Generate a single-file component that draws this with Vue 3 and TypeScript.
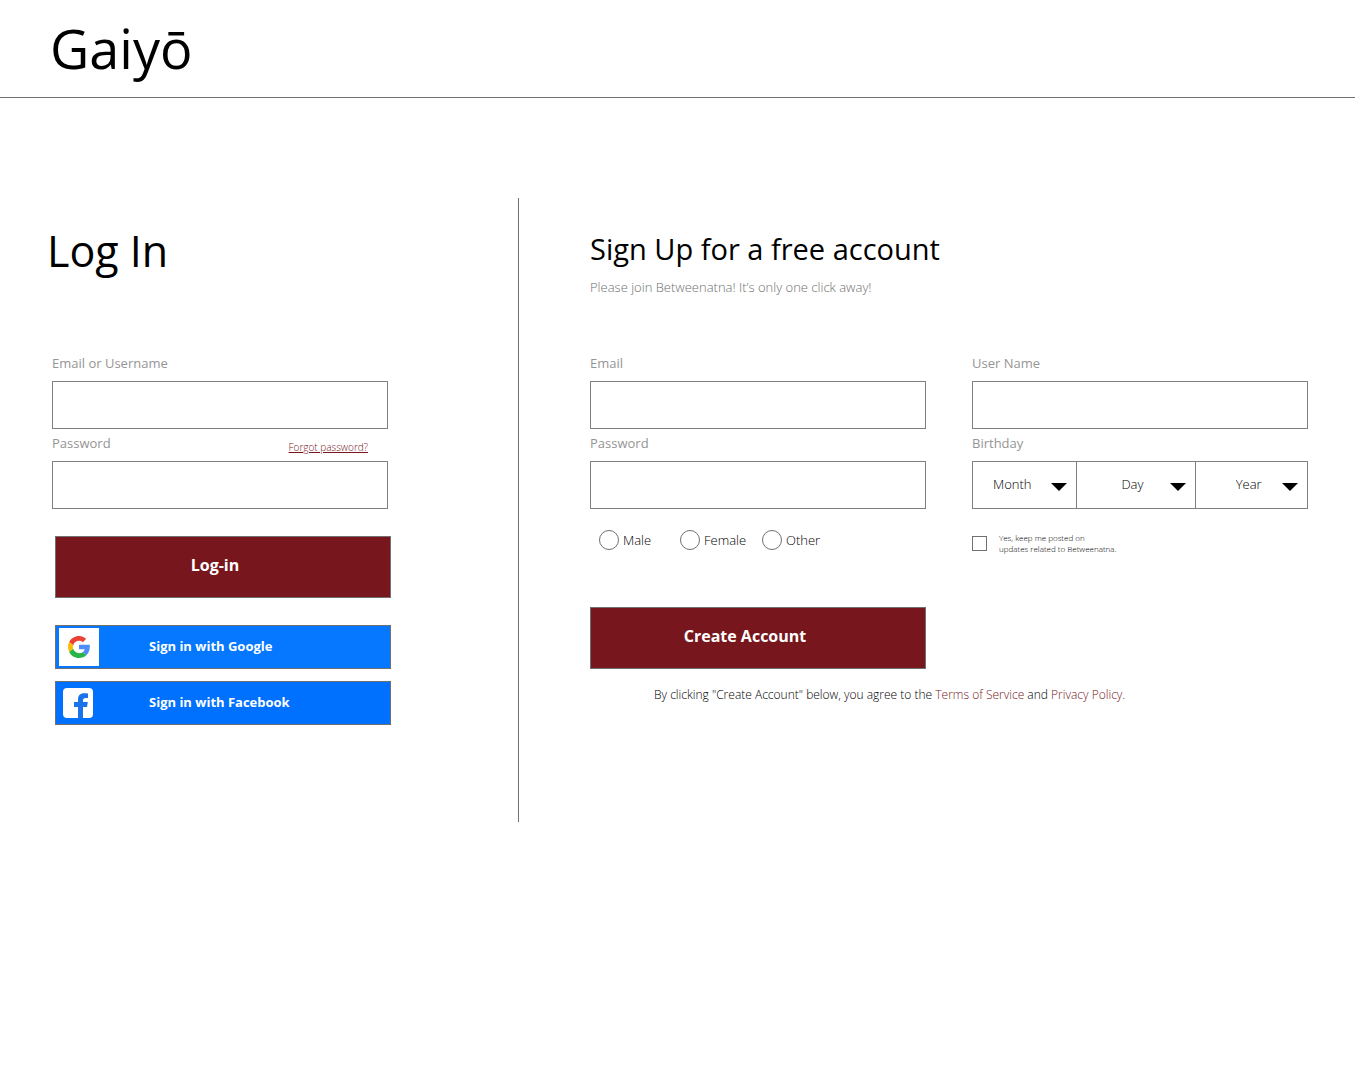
<script setup lang="ts">
import { ref } from 'vue'

interface DatePart {
  id: string
  label: string
  options: string[]
}

const login = ref({ name: '', password: '' })
const signup = ref({ email: '', password: '', userName: '', gender: '', updates: false })

const genders: string[] = ['Male', 'Female', 'Other']

const range = (from: number, to: number): string[] =>
  Array.from({ length: to - from + 1 }, (_, i) => String(from + i))

const dateParts: DatePart[] = [
  { id: 'month', label: 'Month', options: range(1, 12) },
  { id: 'day', label: 'Day', options: range(1, 31) },
  { id: 'year', label: 'Year', options: range(1930, 2020) },
]
const birthday = ref<Record<string, string>>({ month: '', day: '', year: '' })
</script>

<template>
  <div class="page">
    <header class="header">
      <span class="brand">Gaiyō</span>
    </header>

    <main class="main">
      <section class="login">
        <div class="intro">
          <h1 class="login-title">Log In</h1>
        </div>
        <form @submit.prevent>
          <label class="label" for="login-name">Email or Username</label>
          <input id="login-name" v-model="login.name" class="field" type="text" />
          <div class="label-row">
            <label class="label" for="login-password">Password</label>
            <a class="forgot" href="#">Forgot password?</a>
          </div>
          <input id="login-password" v-model="login.password" class="field" type="password" />

          <div class="login-actions">
            <button class="primary login-button" type="submit">Log-in</button>
            <button class="social google" type="button">
              <span class="social-icon google-tile">
                <svg width="22" height="22" viewBox="0 0 48 48" aria-hidden="true">
                  <path fill="#ea4335" d="M24 10.500c3.200 0 6 1.100 8.300 3.200l7.200-7.200C35.500 2.400 30.470 0 24 0 14.620 0 6.510 5.380 2.560 13.220l8.700 6.800C13.100 14.500 18.100 10.500 24 10.500z" />
                  <path fill="#4f8cf7" d="M47.500 19H24v9.800h12.400c-.6 2.700-2.200 5-4.700 6.600l8.200 6.800c4.510-4.180 7.600-10.400 7.600-18.200z" />
                  <path fill="#fbbc05" d="M11.200 28c-.5-1.300-.7-2.600-.7-4s.2-2.700.7-4l-8.640-6.780C.92 16.460 0 20.120 0 24s.92 7.540 2.560 10.780z" />
                  <path fill="#28b446" d="M24 48c6.480 0 11.930-2.130 15.890-5.810l-8.190-6.790c-2 1.300-4.600 2.100-7.700 2.100-5.900 0-10.900-4-12.800-9.500l-8.640 6.780C6.510 42.620 14.620 48 24 48z" />
                </svg>
              </span>
              <span class="social-text">Sign in with Google</span>
            </button>
            <button class="social facebook" type="button">
              <span class="social-icon facebook-tile">
                <svg width="30" height="30" viewBox="0 0 30 30" aria-hidden="true">
                  <rect width="30" height="30" rx="4" fill="#fff" />
                  <path fill="#1a73e8" d="M15 30V19h-4v-5h4v-2.500c0-4 2.200-6.200 6-6.200 1.300 0 2.700.1 4 .3v4.300h-2.400c-2 0-2.600 1-2.600 2.400V14h4.800l-.8 5h-4v11z" />
                </svg>
              </span>
              <span class="social-text">Sign in with Facebook</span>
            </button>
          </div>
        </form>
      </section>

      <section class="signup">
        <div class="intro">
          <h2 class="signup-title">Sign Up for a free account</h2>
          <p class="subtitle">Please join Betweenatna! It’s only one click away!</p>
        </div>
        <form @submit.prevent>
          <div class="columns">
            <div>
              <label class="label" for="email">Email</label>
              <input id="email" v-model="signup.email" class="field" type="email" />
              <label class="label" for="password">Password</label>
              <input id="password" v-model="signup.password" class="field" type="password" />
              <div class="genders" role="radiogroup" aria-label="Gender">
                <label v-for="g in genders" :key="g" class="gender">
                  <input v-model="signup.gender" class="radio" type="radio" name="gender" :value="g" />
                  {{ g }}
                </label>
              </div>
              <button class="primary create-button" type="submit">Create Account</button>
            </div>
            <div>
              <label class="label" for="user-name">User Name</label>
              <input id="user-name" v-model="signup.userName" class="field" type="text" />
              <label class="label" for="month">Birthday</label>
              <div class="birthday">
                <div v-for="part in dateParts" :key="part.id" class="date-part">
                  <select
                    :id="part.id"
                    v-model="birthday[part.id]"
                    class="select"
                    :class="part.id"
                    :aria-label="part.label"
                  >
                    <option value="">{{ part.label }}</option>
                    <option v-for="o in part.options" :key="o" :value="o">{{ o }}</option>
                  </select>
                  <svg class="arrow" width="16" height="8" viewBox="0 0 16 8" aria-hidden="true">
                    <path d="M0 0h16L8 8z" />
                  </svg>
                </div>
              </div>
              <label class="updates">
                <input v-model="signup.updates" class="checkbox" type="checkbox" />
                <span>Yes, keep me posted on<br />updates related to Betweenatna.</span>
              </label>
            </div>
          </div>
          <p class="terms">
            By clicking "Create Account" below, you agree to the
            <a href="#">Terms of Service</a> and <a href="#">Privacy Policy.</a>
          </p>
        </form>
      </section>
    </main>
  </div>
</template>

<style>
body {
  margin: 0;
  background: #fff;
}
</style>

<style scoped>
.page {
  font-family: "Open Sans", "Noto Sans", sans-serif;
  color: #000;
}

.page *,
.page {
  box-sizing: border-box;
}

button,
input,
select {
  font-family: inherit;
  margin: 0;
}

h1,
h2,
p {
  margin: 0;
  font-weight: 400;
}

.header {
  height: 98px;
  padding: 10px 50px 0;
  border-bottom: 1px solid #707070;
}

.brand {
  display: block;
  font-size: 54px;
  line-height: 76px;
}

.main {
  display: grid;
  grid-template-columns: 519fr 836fr;
  padding-top: 100px;
}

.login {
  padding: 0 130px 97px 52px;
  border-right: 1px solid #707070;
}

.signup {
  padding: 0 47px 97px 71px;
}

.intro {
  height: 151px;
  padding-top: 23px;
  white-space: nowrap;
}

.login-title {
  margin-left: -5px;
  font-size: 43px;
  line-height: 60px;
}

.signup-title {
  font-size: 29px;
  line-height: 56px;
}

.subtitle {
  font-size: 13px;
  line-height: 20px;
  font-weight: 300;
  color: #707070;
}

.label {
  display: block;
  height: 32px;
  font-size: 13px;
  line-height: 28px;
  color: #959595;
}

.label-row {
  display: flex;
  justify-content: space-between;
  padding-right: 20px;
}

.forgot {
  font-size: 10px;
  line-height: 36px;
  height: 32px;
  font-weight: 300;
  color: #78161d;
}

.field {
  display: block;
  width: 100%;
  height: 48px;
  padding: 0 12px;
  border: 1px solid #808080;
  border-radius: 0;
  background: #fff;
  font-size: 14px;
}

.primary {
  display: block;
  width: 100%;
  height: 62px;
  border: 1px solid #707070;
  background: #78161d;
  color: #fff;
  font-size: 16px;
  line-height: 24px;
  font-weight: 700;
}

.login-actions {
  display: flex;
  flex-direction: column;
  margin: 27px -3px 0 3px;
}

.login-button {
  padding: 0 16px 4px 0;
  margin-bottom: 27px;
}

.create-button {
  padding: 0 26px 4px 0;
}

.social {
  display: flex;
  align-items: center;
  height: 44px;
  padding: 0 3px;
  border: 1px solid #707070;
  color: #fff;
  font-size: 13px;
  line-height: 18px;
  font-weight: 700;
}

.google {
  margin-bottom: 12px;
  background: #0578ff;
}

.facebook {
  background: #0070ff;
}

.social-icon {
  display: flex;
  align-items: center;
  justify-content: center;
  width: 40px;
  height: 38px;
}

.google-tile {
  background: #fff;
}

.facebook-tile {
  justify-content: flex-start;
  padding-left: 4px;
}

.social-text {
  margin-left: 50px;
  padding-bottom: 2px;
}

.columns {
  display: grid;
  grid-template-columns: 1fr 1fr;
  gap: 46px;
}

.genders {
  display: grid;
  grid-template-columns: 81px 82px auto;
  height: 98px;
  padding: 21px 0 0 9px;
  align-items: start;
}

.gender {
  display: flex;
  align-items: center;
  gap: 4px;
  font-size: 13px;
  line-height: 20px;
  font-weight: 300;
}

.radio {
  appearance: none;
  width: 20px;
  height: 20px;
  border: 1px solid #707070;
  border-radius: 50%;
  background: #fff;
}

.radio:checked {
  background: radial-gradient(#78161d 40%, #fff 45%);
}

.birthday {
  display: grid;
  grid-template-columns: 104fr 119fr 113fr;
  height: 48px;
  border: 1px solid #808080;
}

.date-part {
  position: relative;
}

.date-part + .date-part {
  border-left: 1px solid #808080;
}

.select {
  appearance: none;
  width: 100%;
  height: 46px;
  padding: 0 28px 2px 20px;
  border: 0;
  background: transparent;
  color: #000;
  font-size: 13px;
  font-weight: 300;
}

.select.day {
  padding-left: 44px;
}

.select.year {
  padding-left: 40px;
}

.arrow {
  position: absolute;
  top: 21px;
  right: 9px;
  pointer-events: none;
}

.updates {
  display: flex;
  align-items: center;
  gap: 12px;
  margin-top: 23px;
  font-size: 8px;
  line-height: 11px;
  font-weight: 300;
}

.checkbox {
  appearance: none;
  width: 15px;
  height: 15px;
  border: 1px solid #707070;
  background: #fff;
}

.checkbox:checked {
  background: #78161d;
}

.terms {
  padding: 16px 0 0 64px;
  font-size: 12px;
  line-height: 20px;
  font-weight: 300;
}

.terms a {
  color: #78161d;
  text-decoration: none;
}
</style>
